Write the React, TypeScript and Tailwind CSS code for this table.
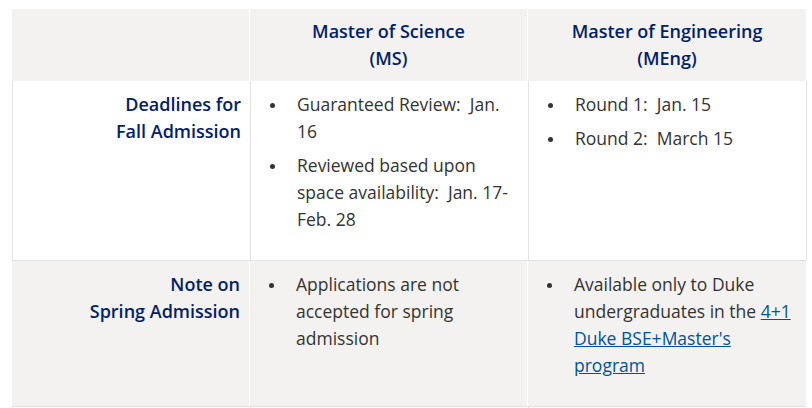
import React from 'react';

const label = 'text-[#012169] font-semibold text-[18px]';

function Bullets({ items }: { items: React.ReactNode[] }) {
  return (
    <ul>
      {items.map((item, i) => (
        <li key={i} className="flex mb-[7px]">
          <span className="w-[36px] shrink-0">
            <span className="block w-[5px] h-[5px] rounded-full bg-[#333] ml-[9px] mt-[12px]" />
          </span>
          <span>{item}</span>
        </li>
      ))}
    </ul>
  );
}

export default function App() {
  return (
    <div
      className="min-h-screen bg-white pt-[9px] pl-[12px] text-[17.5px] leading-[27px] text-[#333]"
      style={{ fontFamily: '"Open Sans", "Noto Sans", sans-serif' }}
    >
      <div className="w-[794px]">
        {/* Header */}
        <div className="grid grid-cols-[238px_278px_278px] bg-[#f3f2f0]">
          <div className="border-r border-white" />
          <div className={`${label} text-center py-[9px] border-r border-white`}>
            Master of Science
            <br />
            (MS)
          </div>
          <div className={`${label} text-center py-[9px]`}>
            Master of Engineering
            <br />
            (MEng)
          </div>
        </div>

        {/* Fall deadlines */}
        <div className="grid grid-cols-[238px_278px_278px] bg-white border-l border-b border-[#e3e3e3]">
          <div className={`${label} text-right pt-[10px] pr-[9px] border-r border-[#e3e3e3]`}>
            Deadlines for
            <br />
            Fall Admission
          </div>
          <div className="pt-[10px] pb-[20px] pl-[10px] pr-[10px] border-r border-[#e3e3e3]">
            <Bullets
              items={[
                'Guaranteed Review:\u00a0 Jan. 16',
                'Reviewed based upon space availability:\u00a0 Jan. 17-Feb. 28',
              ]}
            />
          </div>
          <div className="pt-[10px] pb-[20px] pl-[10px] pr-[10px] border-r border-[#e3e3e3]">
            <Bullets items={['Round 1:\u00a0 Jan. 15', 'Round 2:\u00a0 March 15']} />
          </div>
        </div>

        {/* Spring note */}
        <div className="grid grid-cols-[238px_278px_278px] bg-[#f3f2f0]">
          <div className={`${label} text-right pt-[10px] pr-[9px] border-r border-white`}>
            Note on
            <br />
            Spring Admission
          </div>
          <div className="pt-[10px] pb-[20px] pl-[10px] pr-[10px] border-r border-white">
            <Bullets items={['Applications are not accepted for spring admission']} />
          </div>
          <div className="pt-[10px] pb-[20px] pl-[10px] pr-[6px]">
            <Bullets
              items={[
                <>
                  Available only to Duke undergraduates in the{' '}
                  <a href="#" className="text-[#00539b] underline">
                    4+1 Duke BSE+Master's program
                  </a>
                </>,
              ]}
            />
          </div>
        </div>

        <div className="grid grid-cols-[238px_278px_278px] h-[20px] border-l border-t border-[#e3e3e3]">
          <div className="border-r border-[#e3e3e3]" />
          <div className="border-r border-[#e3e3e3]" />
          <div />
        </div>
      </div>
    </div>
  );
}
